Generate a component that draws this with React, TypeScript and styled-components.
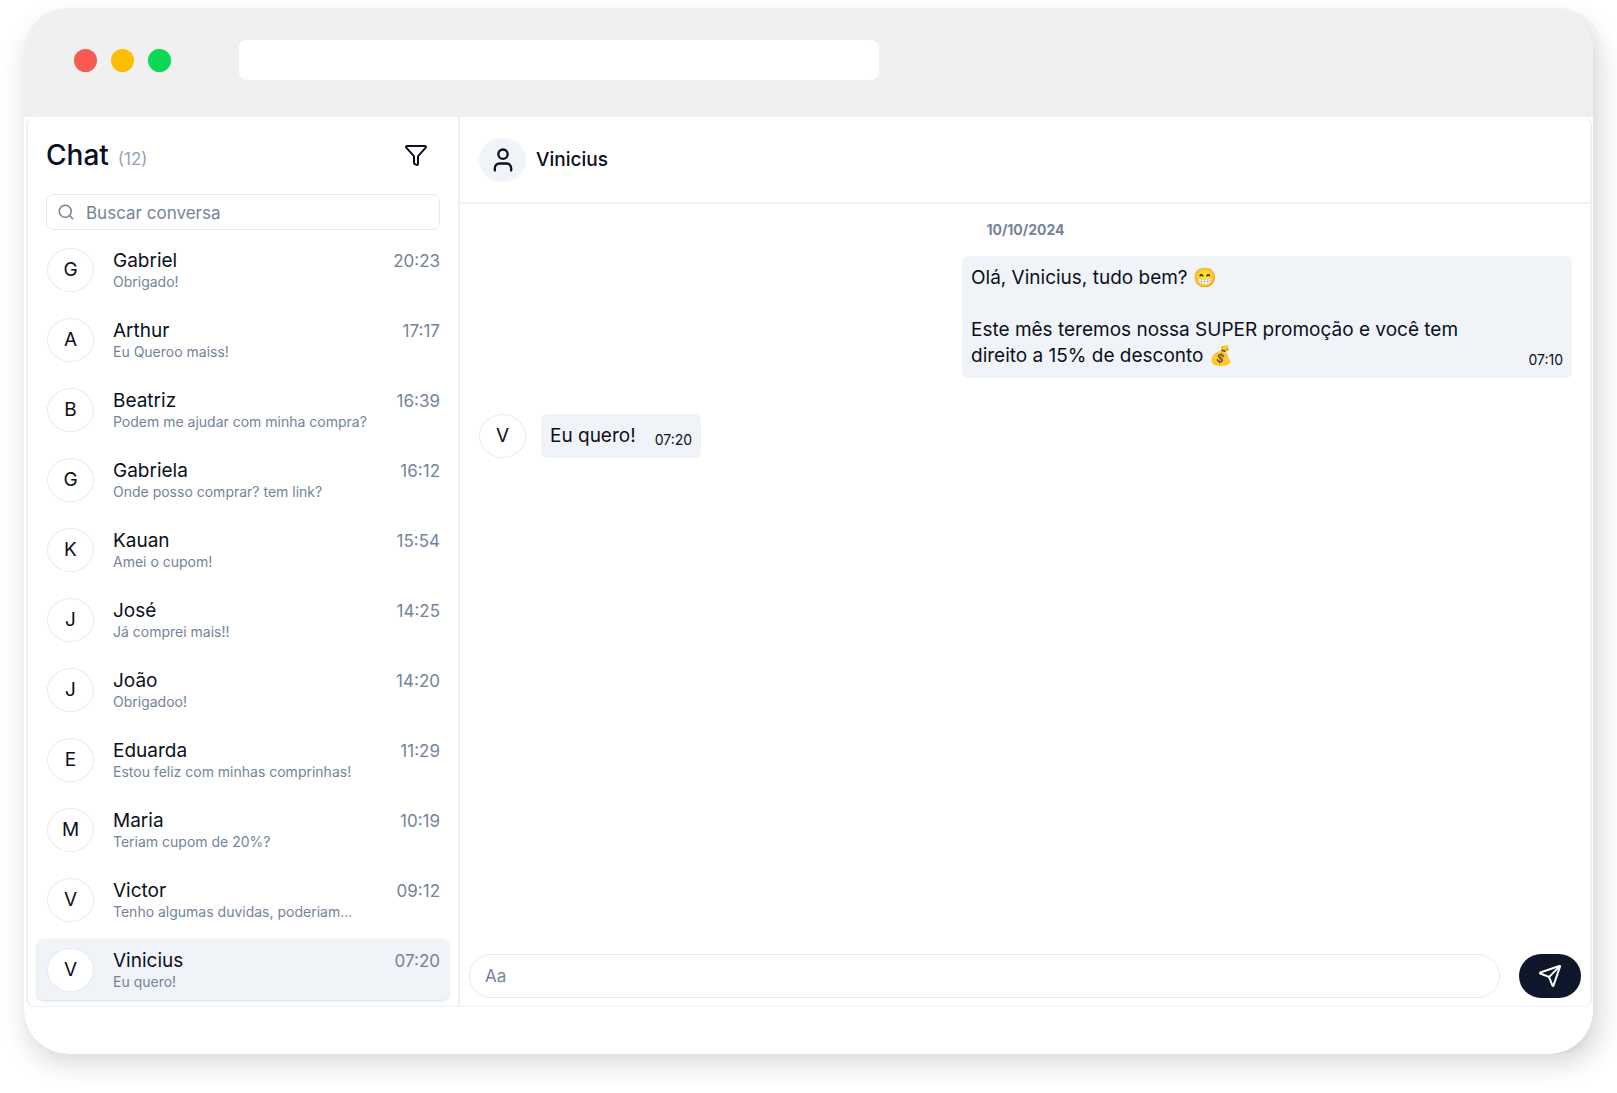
import React from "react";
import styled, { createGlobalStyle } from "styled-components";
import { Search, User, Send, Filter } from "lucide-react";

const ink = "#0b1020";
const muted = "#75839a";
const line = "#ecf1f7";
const surface = "#f0f3f8";

const GlobalStyle = createGlobalStyle`
  *, *::before, *::after { box-sizing: border-box; }
  body {
    margin: 0;
    background: #fff;
    color: ${ink};
    font-family: Inter, "Liberation Sans", sans-serif;
    font-size: 19px;
    line-height: 26px;
  }
  button, input { font: inherit; color: inherit; }
`;

const Page = styled.div`
  display: flex;
  min-height: 100vh;
  padding: 8px 14px 39px 24px;
`;

const Backdrop = styled.div`
  display: flex;
  flex: 1;
  min-width: 0;
  padding-right: 10px;
  border-radius: 44px;
  background: #f5f5f5;
  overflow: hidden;
  box-shadow: 0 12px 26px -2px rgba(0, 0, 0, 0.15);
`;

const Window = styled.div`
  display: flex;
  flex-direction: column;
  flex: 1;
  min-width: 0;
  border-radius: 44px;
  background: #fff;
  overflow: hidden;
  box-shadow: 0 8px 18px rgba(0, 0, 0, 0.16);
`;

const TitleBar = styled.div`
  display: flex;
  align-items: center;
  height: 109px;
  padding: 0 50px 5px;
  background: #f0f0f0;
`;

const Lights = styled.div`
  display: flex;
  gap: 14px;
  margin-right: 68px;
`;

const Light = styled.span<{ $color: string }>`
  width: 23px;
  height: 23px;
  border-radius: 50%;
  background: ${(p) => p.$color};
`;

const AddressBar = styled.input`
  flex: 0 1 640px;
  min-width: 0;
  height: 40px;
  padding: 0 16px;
  border: 0;
  border-radius: 8px;
  background: #fff;
`;

const AppPanel = styled.div`
  display: flex;
  flex: 1;
  margin: 0 1px 47px 2px;
  border: solid ${line};
  border-width: 0 2px 1px;
  border-radius: 8px;
`;

const Sidebar = styled.aside`
  display: flex;
  flex-direction: column;
  width: 432px;
  flex-shrink: 0;
  padding: 24px 9px 6px;
  border-right: 2px solid ${line};
`;

const SidebarHeader = styled.header`
  display: flex;
  align-items: center;
  justify-content: space-between;
  height: 28px;
  padding: 0 21px 0 9px;
`;

const Title = styled.h1`
  display: flex;
  align-items: baseline;
  gap: 9px;
  margin: 0;
  padding-top: 4px;
  font-size: 28px;
  font-weight: 500;
`;

const Count = styled.span`
  color: #94a3b8;
  font-size: 17px;
  font-weight: 400;
`;

const IconButton = styled.button`
  display: flex;
  padding: 0;
  border: 0;
  background: none;
`;

const SearchBox = styled.label`
  display: flex;
  align-items: center;
  gap: 11px;
  height: 36px;
  margin: 25px 9px 9px;
  padding: 0 10px;
  border: 1px solid #e6ebf3;
  border-radius: 7px;
  color: ${muted};
`;

const SearchInput = styled.input`
  flex: 1;
  min-width: 0;
  padding: 2px 0 0;
  border: 0;
  outline: 0;
  background: none;
  font-size: 17px;
  &::placeholder { color: ${muted}; opacity: 1; }
`;

const List = styled.ul`
  display: flex;
  flex-direction: column;
  gap: 9px;
  margin: 0;
  padding: 0;
  list-style: none;
`;

const Row = styled.button<{ $active: boolean }>`
  display: flex;
  align-items: center;
  width: 100%;
  height: 61px;
  padding: 0 9px 0 10px;
  border: 0;
  border-radius: 7px;
  text-align: left;
  background: ${(p) => (p.$active ? surface : "transparent")};
  box-shadow: ${(p) => (p.$active ? "0 1px 3px rgba(15, 23, 42, 0.16)" : "none")};
`;

const Avatar = styled.span<{ $filled?: boolean }>`
  display: flex;
  align-items: center;
  justify-content: center;
  flex-shrink: 0;
  width: 47px;
  height: 44px;
  border: 1px solid ${(p) => (p.$filled ? surface : "#e6ebf3")};
  border-radius: 50%;
  background: ${(p) => (p.$filled ? surface : "#fff")};
`;

const RowText = styled.span`
  display: flex;
  flex-direction: column;
  flex: 1;
  min-width: 0;
  margin-left: 19px;
`;

const RowTop = styled.span`
  display: flex;
  justify-content: space-between;
  line-height: 24px;
`;

const RowTime = styled.span`
  color: ${muted};
  font-size: 17px;
`;

const Preview = styled.span`
  color: ${muted};
  font-size: 14px;
  line-height: 18px;
`;

const Conversation = styled.main`
  display: flex;
  flex-direction: column;
  flex: 1;
  min-width: 0;
`;

const ConversationHeader = styled.header`
  display: flex;
  align-items: center;
  gap: 10px;
  height: 87px;
  padding: 0 19px;
  border-bottom: 2px solid ${line};
`;

const ContactName = styled.h2`
  margin: 0;
  font-size: 19px;
  font-weight: 500;
`;

const Thread = styled.div`
  display: flex;
  flex-direction: column;
  flex: 1;
  padding: 13px 18px 0 19px;
`;

const DateLabel = styled.time`
  align-self: center;
  margin-bottom: 13px;
  color: ${muted};
  font-size: 14px;
  font-weight: 700;
`;

const Message = styled.div<{ $own?: boolean }>`
  display: flex;
  justify-content: ${(p) => (p.$own ? "flex-end" : "flex-start")};
  gap: 15px;
  margin-bottom: 36px;
`;

const Bubble = styled.div<{ $wide?: boolean }>`
  display: flex;
  align-items: flex-end;
  justify-content: space-between;
  gap: 19px;
  flex: 0 1 ${(p) => (p.$wide ? "610px" : "auto")};
  padding: 9px;
  border-radius: 6px;
  background: ${surface};
`;

const BubbleText = styled.p`
  max-width: 510px;
  margin: 0;
  white-space: pre-line;
`;

const BubbleTime = styled.time`
  font-size: 14px;
  line-height: 18px;
`;

const Composer = styled.form`
  display: flex;
  align-items: center;
  gap: 19px;
  padding: 0 9px 8px;
`;

const MessageInput = styled.input`
  flex: 1;
  min-width: 0;
  height: 44px;
  padding: 0 15px;
  border: 1px solid #e6ebf3;
  border-radius: 22px;
  outline: 0;
  background: #fff;
  font-size: 17px;
  &::placeholder { color: ${muted}; opacity: 1; }
`;

const SendButton = styled.button`
  display: flex;
  align-items: center;
  justify-content: center;
  width: 62px;
  height: 44px;
  border: 0;
  border-radius: 22px;
  background: #0f172a;
  color: #fff;
`;

const chats = [
  { name: "Gabriel", text: "Obrigado!", time: "20:23" },
  { name: "Arthur", text: "Eu Queroo maiss!", time: "17:17" },
  { name: "Beatriz", text: "Podem me ajudar com minha compra?", time: "16:39" },
  { name: "Gabriela", text: "Onde posso comprar? tem link?", time: "16:12" },
  { name: "Kauan", text: "Amei o cupom!", time: "15:54" },
  { name: "José", text: "Já comprei mais!!", time: "14:25" },
  { name: "João", text: "Obrigadoo!", time: "14:20" },
  { name: "Eduarda", text: "Estou feliz com minhas comprinhas!", time: "11:29" },
  { name: "Maria", text: "Teriam cupom de 20%?", time: "10:19" },
  { name: "Victor", text: "Tenho algumas duvidas, poderiam...", time: "09:12" },
  { name: "Vinicius", text: "Eu quero!", time: "07:20" },
];

export default function App() {
  return (
    <>
      <GlobalStyle />
      <Page>
        <Backdrop>
          <Window>
            <TitleBar>
              <Lights>
                <Light $color="#f65a52" />
                <Light $color="#ffbd00" />
                <Light $color="#0bd853" />
              </Lights>
              <AddressBar aria-label="Endereço" />
            </TitleBar>
            <AppPanel>
              <Sidebar>
                <SidebarHeader>
                  <Title>
                    Chat <Count>(12)</Count>
                  </Title>
                  <IconButton type="button" aria-label="Filtrar">
                    <Filter size={24} strokeWidth={2} />
                  </IconButton>
                </SidebarHeader>
                <SearchBox>
                  <Search size={18} strokeWidth={2} />
                  <SearchInput type="text" placeholder="Buscar conversa" aria-label="Buscar conversa" />
                </SearchBox>
                <List>
                  {chats.map((c) => (
                    <li key={c.name}>
                      <Row type="button" $active={c.name === "Vinicius"}>
                        <Avatar>{c.name[0]}</Avatar>
                        <RowText>
                          <RowTop>
                            <span>{c.name}</span>
                            <RowTime>{c.time}</RowTime>
                          </RowTop>
                          <Preview>{c.text}</Preview>
                        </RowText>
                      </Row>
                    </li>
                  ))}
                </List>
              </Sidebar>
              <Conversation>
                <ConversationHeader>
                  <Avatar $filled>
                    <User size={28} strokeWidth={2} />
                  </Avatar>
                  <ContactName>Vinicius</ContactName>
                </ConversationHeader>
                <Thread>
                  <DateLabel>10/10/2024</DateLabel>
                  <Message $own>
                    <Bubble $wide>
                      <BubbleText>
                        {"Olá, Vinicius, tudo bem? 😁\n\nEste mês teremos nossa SUPER promoção e você tem direito a 15% de desconto 💰"}
                      </BubbleText>
                      <BubbleTime>07:10</BubbleTime>
                    </Bubble>
                  </Message>
                  <Message>
                    <Avatar>V</Avatar>
                    <Bubble>
                      <BubbleText>Eu quero!</BubbleText>
                      <BubbleTime>07:20</BubbleTime>
                    </Bubble>
                  </Message>
                </Thread>
                <Composer onSubmit={(e) => e.preventDefault()}>
                  <MessageInput type="text" placeholder="Aa" aria-label="Mensagem" />
                  <SendButton type="submit" aria-label="Enviar">
                    <Send size={24} strokeWidth={2} />
                  </SendButton>
                </Composer>
              </Conversation>
            </AppPanel>
          </Window>
        </Backdrop>
      </Page>
    </>
  );
}
